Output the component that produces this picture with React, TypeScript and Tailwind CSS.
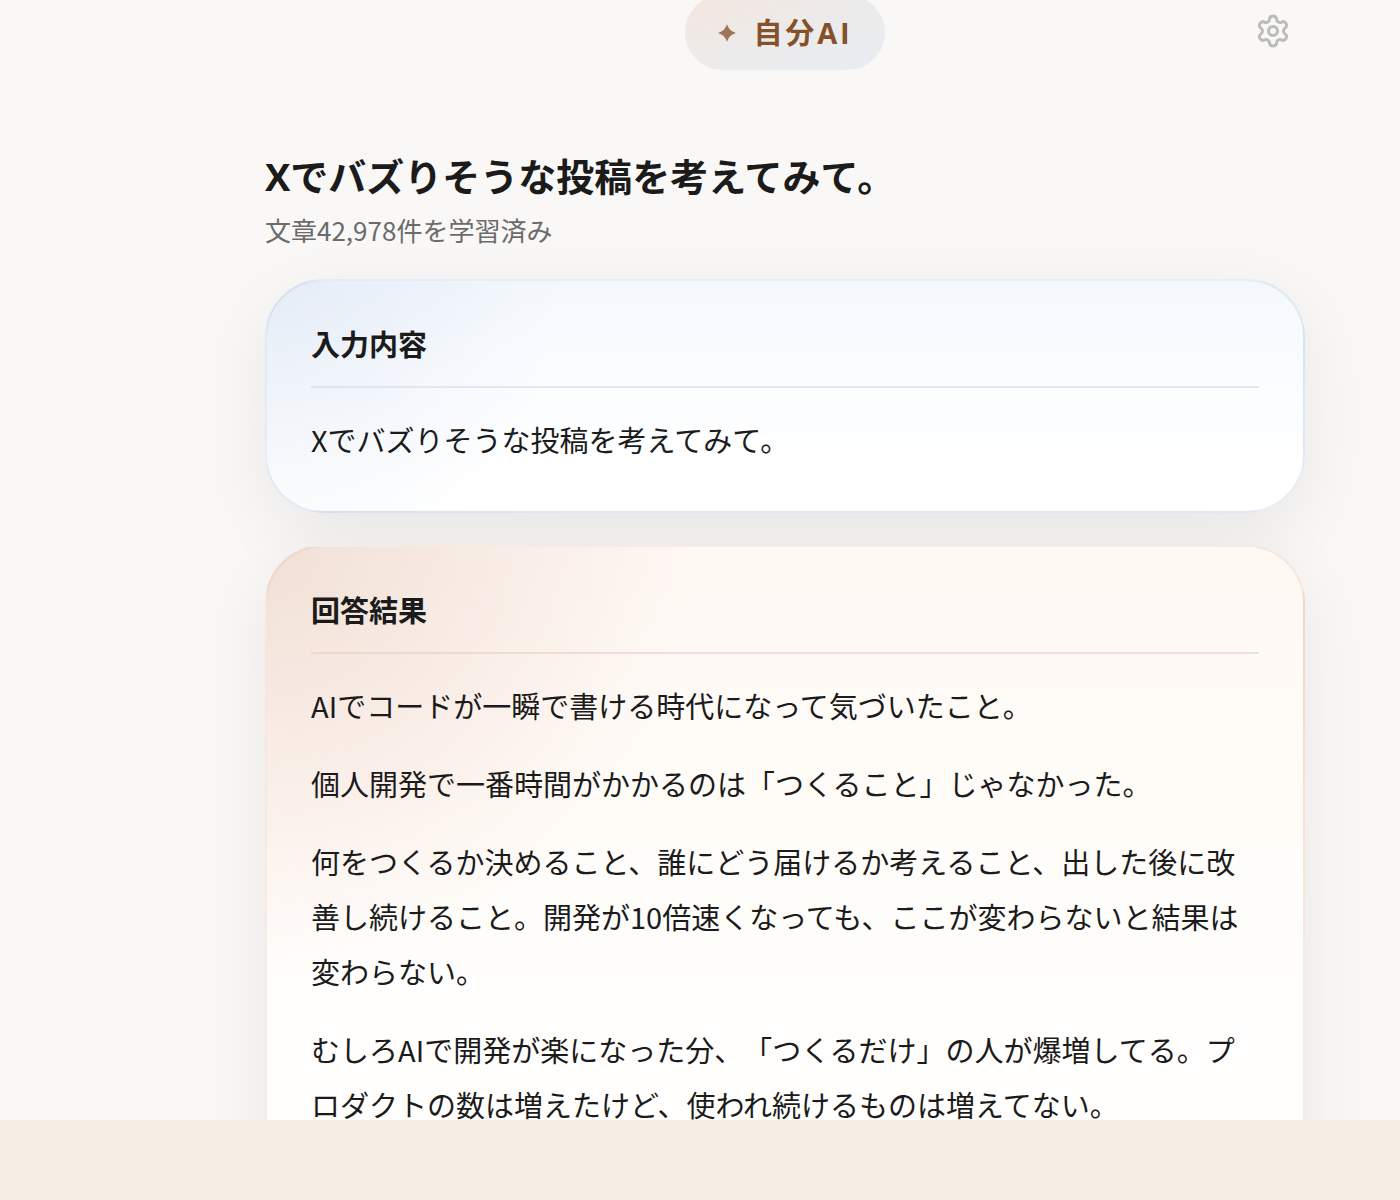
import type { ReactNode } from "react";
import { Settings } from "lucide-react";

const answer = [
  "AIでコードが一瞬で書ける時代になって気づいたこと。",
  "個人開発で一番時間がかかるのは「つくること」じゃなかった。",
  "何をつくるか決めること、誰にどう届けるか考えること、出した後に改善し続けること。開発が10倍速くなっても、ここが変わらないと結果は変わらない。",
  "むしろAIで開発が楽になった分、「つくるだけ」の人が爆増してる。プロダクトの数は増えたけど、使われ続けるものは増えてない。",
];

function Card({ title, className, lineClassName, children }: {
  title: string;
  className: string;
  lineClassName: string;
  children: ReactNode;
}) {
  return (
    <section className={`shrink-0 rounded-[58px] border-2 p-11 shadow-[0_20px_72px_rgba(0,0,0,0.07)] ${className}`}>
      <h2 className={`border-b-2 pb-[25px] text-[29px] leading-9 font-bold ${lineClassName}`}>{title}</h2>
      <div className="mt-6 flex flex-col gap-[23px] text-[29px] leading-[55px]">{children}</div>
    </section>
  );
}

export default function App() {
  return (
    <div lang="ja" className="flex h-screen flex-col overflow-hidden bg-[#f9f8f6] font-['Noto_Sans_CJK_JP',sans-serif] text-[#1b1b1b] [text-spacing-trim:space-all]">
      <div className="flex min-h-0 flex-1 flex-col overflow-hidden pr-[95px] pl-[265px]">
        <header className="-mt-[5px] grid shrink-0 grid-cols-[1fr_auto_1fr] items-center">
          <div className="col-start-2 flex h-[75px] items-center gap-4 rounded-full bg-linear-to-br from-[#f5e6e0] via-[#ecebea] to-[#e8ecf2] px-8 text-[#85502a]">
            <svg viewBox="0 0 20 20" className="size-5 opacity-75" fill="currentColor" aria-hidden="true">
              <path d="M10 1C11.6 6 14 8.4 19 10C14 11.6 11.6 14 10 19C8.4 14 6 11.6 1 10C6 8.4 8.4 6 10 1Z" />
            </svg>
            <span className="font-['Open_Sans','Noto_Sans_CJK_JP',sans-serif] text-[29px] leading-10 font-bold tracking-widest">自分AI</span>
          </div>
          <button aria-label="設定" className="mr-[14px] mb-1 justify-self-end text-[#bcbcbb]">
            <Settings size={36} />
          </button>
        </header>

        <main className="flex flex-col">
          <h1 className="mt-20 font-['Open_Sans','Noto_Sans_CJK_JP',sans-serif] text-[38px] leading-[52px] font-bold">Xでバズりそうな投稿を考えてみて。</h1>
          <p className="mt-2 text-[26px] leading-10 text-[#6b6b6b]">文章42,978件を学習済み</p>

          <div className="mt-[29px] flex flex-col gap-8">
            <Card
              title="入力内容"
              className="border-[#b4cbe8]/35 bg-[radial-gradient(circle_at_top_left,rgba(214,224,240,0.5),transparent_28%),linear-gradient(#f4f8fd,#fafcff_35%,#ffffff_85%)]"
              lineClassName="border-[#c8d8e8]/50"
            >
              <p>Xでバズりそうな投稿を考えてみて。</p>
            </Card>
            <Card
              title="回答結果"
              className="pb-96 border-[#e6bfa8]/30 bg-[radial-gradient(circle_at_top_left,rgba(228,200,184,0.5),rgba(244,222,214,0.4)_18%,transparent_30%),linear-gradient(#fef8f3,#fffbf6_20%,#fffefc_45%,#ffffff)]"
              lineClassName="border-[#e6c8b8]/50"
            >
              {answer.map((text) => <p key={text}>{text}</p>)}
            </Card>
          </div>
        </main>
      </div>
      <footer className="h-20 shrink-0 bg-[#f6ede4]" />
    </div>
  );
}
